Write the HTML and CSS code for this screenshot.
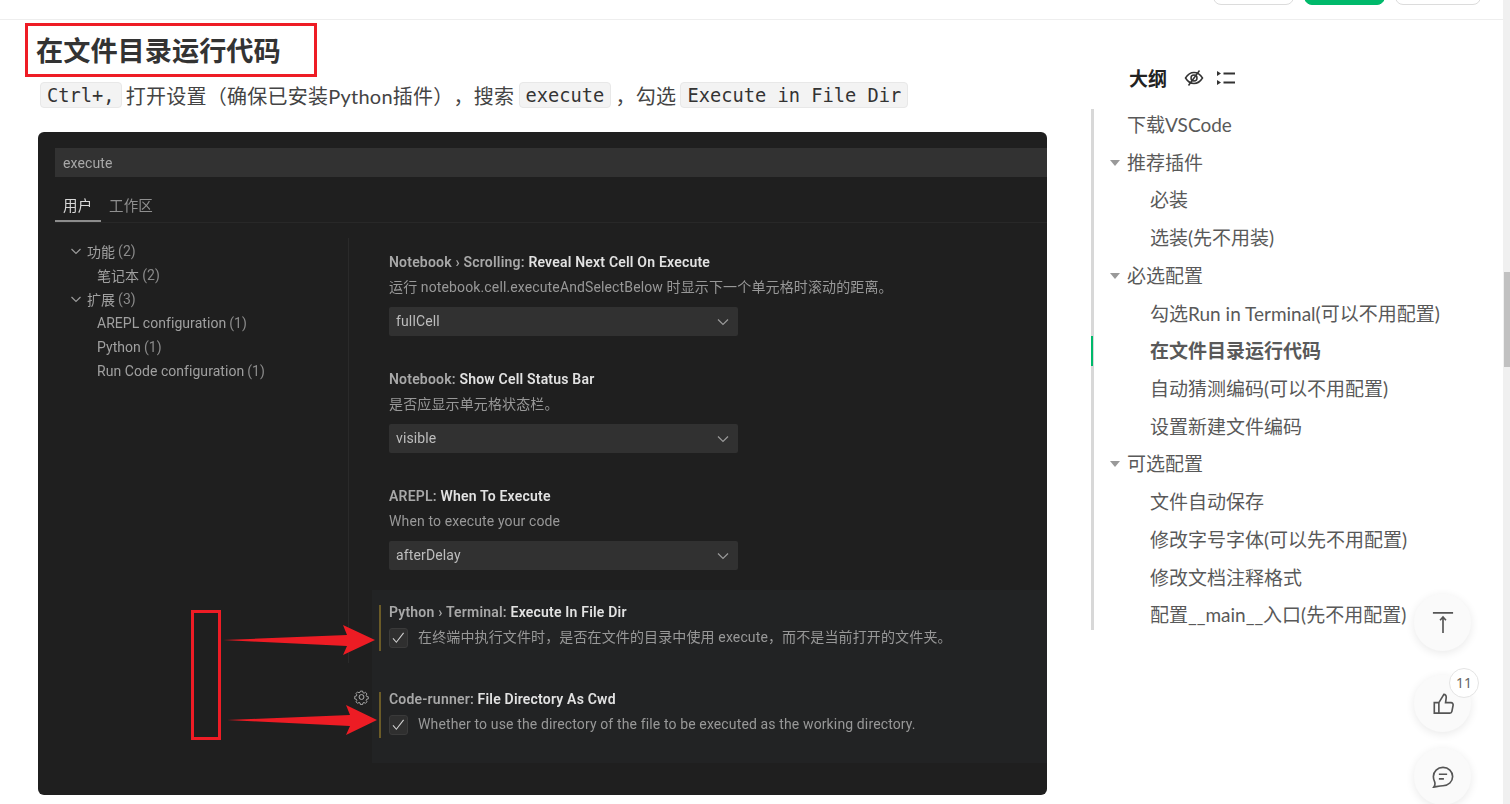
FILE: index.html
```html
<!DOCTYPE html>
<html lang="zh-CN">
<head>
<meta charset="utf-8">
<title>在文件目录运行代码</title>
<link rel="stylesheet" href="styles.css">
</head>
<body>
<div class="page">
  <header class="topbar">
    <span class="top-btn"></span>
    <span class="top-btn primary"></span>
    <span class="top-btn wide"></span>
  </header>
  <main class="main">
    <article class="article">
      <h2 class="heading">在文件目录运行代码</h2>
      <p class="para"><code class="code">Ctrl+,</code> 打开设置（确保已安装Python插件），搜索 <code class="code">execute</code> ，勾选 <code class="code">Execute in File Dir</code></p>
      <div class="shot">
        <div class="search">execute</div>
        <div class="tabs">
          <span class="tab active">用户</span>
          <span class="tab">工作区</span>
        </div>
        <div class="shot-body">
          <div class="tree">
            <div class="tree-row"><svg class="chev" viewBox="0 0 12 12"><path d="M1.5 4l4.5 4.5L10.500 4"/></svg>功能 <span>(2)</span></div>
            <div class="tree-row child">笔记本 <span>(2)</span></div>
            <div class="tree-row"><svg class="chev" viewBox="0 0 12 12"><path d="M1.500 4l4.500 4.500L10.500 4"/></svg>扩展 <span>(3)</span></div>
            <div class="tree-row child">AREPL configuration <span>(1)</span></div>
            <div class="tree-row child">Python <span>(1)</span></div>
            <div class="tree-row child">Run Code configuration <span>(1)</span></div>
          </div>
          <div class="settings">
            <section class="setting">
              <div class="s-title">Notebook › Scrolling: <b>Reveal Next Cell On Execute</b></div>
              <div class="s-desc">运行 notebook.cell.executeAndSelectBelow 时显示下一个单元格时滚动的距离。</div>
              <div class="select">fullCell<svg class="chev sel" viewBox="0 0 12 12"><path d="M1 3.500l5 5 5-5"/></svg></div>
            </section>
            <section class="setting">
              <div class="s-title">Notebook: <b>Show Cell Status Bar</b></div>
              <div class="s-desc">是否应显示单元格状态栏。</div>
              <div class="select">visible<svg class="chev sel" viewBox="0 0 12 12"><path d="M1 3.500l5 5 5-5"/></svg></div>
            </section>
            <section class="setting last">
              <div class="s-title">AREPL: <b>When To Execute</b></div>
              <div class="s-desc">When to execute your code</div>
              <div class="select">afterDelay<svg class="chev sel" viewBox="0 0 12 12"><path d="M1 3.500l5 5 5-5"/></svg></div>
            </section>
            <section class="band">
              <div class="item">
                <div class="i-title">Python › Terminal: <b>Execute In File Dir</b></div>
                <div class="i-row"><span class="check"><svg viewBox="0 0 20 20"><path d="M3.500 10.500l4 4.500L16 4"/></svg></span>在终端中执行文件时，是否在文件的目录中使用 execute，而不是当前打开的文件夹。</div>
              </div>
              <div class="item">
                <div class="i-title">Code-runner: <b>File Directory As Cwd</b></div>
                <div class="i-row"><span class="check"><svg viewBox="0 0 20 20"><path d="M3.500 10.500l4 4.500L16 4"/></svg></span>Whether to use the directory of the file to be executed as the working directory.</div>
              </div>
            </section>
          </div>
        </div>
        <svg class="gear" viewBox="0 0 16 16"><path d="M6.700 1h2.600l.4 1.900 1.300.6 1.700-1 1.800 1.800-1 1.700.5 1.300 2 .4v2.600l-2 .4-.5 1.300 1 1.700-1.800 1.800-1.700-1-1.300.5-.4 2H6.700l-.4-2-1.300-.5-1.700 1-1.800-1.800 1-1.700-.5-1.300-2-.4V7.200l2-.4.5-1.300-1-1.700 1.800-1.800 1.700 1 1.300-.6z" transform="translate(.8 .8) scale(.9)"/><circle cx="8" cy="8" r="2.600"/></svg>
        <div class="mark"></div>
        <svg class="arrows" viewBox="0 0 1009 663"><path d="M185 508L309 503L305 493L337 508L305 523L309 514Z"/><path d="M189 588L312 583L308 573L339 588L308 603L312 594Z"/></svg>
      </div>
    </article>
    <aside class="outline">
      <div class="outline-head">
        <span class="outline-title">大纲</span>
        <svg class="ic-eye" viewBox="0 0 20 20"><path d="M1.500 10C4 6 7 4.500 10 4.500S16 6 18.500 10C16 14 13 15.500 10 15.500S4 14 1.500 10Z"/><circle cx="10" cy="10" r="3"/><path d="M15.500 2.500L4.500 17.500"/></svg>
        <svg class="ic-list" viewBox="0 0 18 16"><path class="fill" d="M0 1l4 2.500L0 6zM0 10l4 2.500L0 15z"/><path d="M6.500 3.500H18M6.500 12.500H18"/></svg>
      </div>
      <div class="rail">
        <ul class="rows">
          <li class="row">下载VSCode</li>
          <li class="row tri">推荐插件</li>
          <li class="row sub">必装</li>
          <li class="row sub">选装(先不用装)</li>
          <li class="row tri">必选配置</li>
          <li class="row sub">勾选Run in Terminal(可以不用配置)</li>
          <li class="row sub active">在文件目录运行代码</li>
          <li class="row sub">自动猜测编码(可以不用配置)</li>
          <li class="row sub">设置新建文件编码</li>
          <li class="row tri">可选配置</li>
          <li class="row sub">文件自动保存</li>
          <li class="row sub">修改字号字体(可以先不用配置)</li>
          <li class="row sub">修改文档注释格式</li>
          <li class="row sub">配置__main__入口(先不用配置)</li>
        </ul>
      </div>
    </aside>
  </main>
</div>
<div class="scrollbar"><div class="thumb"></div></div>
<div class="fabs">
  <div class="fab top"><svg viewBox="0 0 24 24"><path d="M1 1H23M12 23V5.500M8.800 9L12 5.500l3.200 3.500"/></svg></div>
  <div class="fab like">
    <svg viewBox="0 0 24 24"><path d="M7.500 10.500H2.500V22H7.500M7.500 10.500V22H19.500C21 22 21.500 21 21.700 20L23 13.500C23.300 12 22.300 10.500 20.800 10.500H14.800L15.500 5C15.700 3 14.500 1.500 13 1.500L7.500 10.500Z"/></svg>
    <span class="badge">11</span>
  </div>
  <div class="fab chat"><svg viewBox="0 0 24 24"><path d="M12 1.500C18 1.500 22.500 6 22.500 11.500S18 21.500 12 21.500C8.500 21.500 5 22.500 2 23C3.500 21 3.500 19 2.800 17C2 15.500 1.500 13.500 1.500 11.500C1.500 6 6 1.500 12 1.500ZM7.500 9H16.500M7.500 14H13"/></svg></div>
</div>
</body>
</html>
```
FILE: styles.css
```css
* { box-sizing: border-box; }
html, body { margin: 0; height: 100%; }
body {
  display: flex;
  overflow: hidden;
  background: #fff;
  color: #333;
  font-family: "Noto Sans", "Noto Sans CJK SC", sans-serif;
  text-spacing-trim: space-all;
}
.page { flex: 1; min-width: 0; display: flex; flex-direction: column; height: 804px; overflow: hidden; }

.topbar {
  flex: none;
  height: 20px;
  display: flex;
  justify-content: flex-end;
  align-items: flex-end;
  gap: 10px;
  padding: 0 22px 14px 0;
  border-bottom: 1px solid #eeeeee;
  overflow: hidden;
}
.top-btn { flex: none; width: 81px; height: 30px; border: 1px solid #dcdcdc; border-radius: 8px; background: #fff; }
.top-btn.primary { background: #00b96b; border-color: #00b96b; }
.top-btn.wide { width: 86px; }

.main { flex: 1; display: flex; min-height: 0; }
.article { flex: 0 0 1091px; padding-left: 38px; }
.heading {
  width: 292px;
  height: 54px;
  margin: 3px 0 0 -13px;
  padding-left: 8px;
  border: 3px solid #ee1c25;
  font-size: 27.200px;
  line-height: 50px;
  font-weight: 700;
  color: #333;
  white-space: nowrap;
}
.para {
  margin: 5px 0 0 2px;
  height: 26px;
  font-family: "Lato", "Noto Sans CJK SC", sans-serif;
  font-size: 20px;
  line-height: 28px;
  letter-spacing: .25px;
  word-spacing: -1.200px;
  color: #444;
  white-space: nowrap;
}
.code {
  display: inline-block;
  height: 26px;
  padding: 0 6px;
  border: 1px solid #e8e8e8;
  border-radius: 4px;
  background: #f3f3f3;
  color: #333;
  font-family: "DejaVu Sans Mono", "Liberation Mono", monospace;
  font-size: 18.700px;
  line-height: 26px;
  letter-spacing: 0;
  word-spacing: 0;
  vertical-align: top;
}

.shot {
  position: relative;
  width: 1009px;
  height: 663px;
  margin-top: 24px;
  padding: 16px 0 0 17px;
  border-radius: 6px;
  overflow: hidden;
  background: #1f1f1f;
  color: #a6a6a6;
  font-family: "Roboto", "Noto Sans CJK SC", sans-serif;
  font-size: 14px;
  letter-spacing: .13px;
  filter: blur(.3px);
}
.search {
  height: 29px;
  padding-left: 8px;
  background: #323232;
  font-size: 14px;
  line-height: 30px;
  color: #a8a8a8;
}
.tabs {
  height: 46px;
  display: flex;
  align-items: flex-end;
  border-bottom: 1px solid #282828;
}
.tab { width: 46px; height: 33px; font-size: 14.500px; line-height: 36px; color: #8f8f8f; padding-left: 8px; white-space: nowrap; }
.tab.active { color: #d8d8d8; border-bottom: 2px solid #8c8c8c; }
.shot-body { display: flex; height: 440px; }
.tree {
  flex: none;
  width: 294px;
  margin-top: 15px;
  padding: 1px 0 0 15px;
  border-right: 1px solid #2a2a2a;
  letter-spacing: .05px;
}
.tree-row { display: flex; align-items: center; gap: 3px; height: 24px; color: #a0a0a0; white-space: nowrap; }
.tree-row span { color: #8a8a8a; }
.tree-row.child { padding-left: 27px; }
.chev { flex: none; width: 12px; height: 12px; margin-right: 2px; fill: none; stroke: #9a9a9a; stroke-width: 1.200; }
.settings { flex: 1; min-width: 0; padding-top: 27px; }
.setting { margin: 0 0 31px 40px; }
.setting.last { margin-bottom: 20px; }
.s-title { height: 24px; line-height: 24px; color: #a8a8a8; font-weight: 600; letter-spacing: .2px; white-space: nowrap; }
.s-title b, .i-title b { color: #e2e2e2; font-weight: 600; }
.s-desc { height: 25px; line-height: 26px; color: #989898; white-space: nowrap; }
.select {
  display: flex;
  align-items: center;
  justify-content: space-between;
  width: 349px;
  height: 29px;
  margin-top: 8px;
  padding: 0 8px 1px 7px;
  border-radius: 2px;
  background: #313131;
  color: #bdbdbd;
}
.chev.sel { margin: 2px 1px 0 0; }
.band {
  margin-left: 23px;
  height: 173px;
  padding: 15px 0 0 7px;
  background: #222324;
}
.item {
  height: 46px;
  margin-bottom: 41px;
  padding-left: 8px;
  border-left: 2px solid #6b5b27;
}
.i-title { height: 15px; line-height: 15px; color: #a8a8a8; font-weight: 600; letter-spacing: .2px; white-space: nowrap; }
.i-row { display: flex; align-items: flex-start; margin-top: 8px; gap: 10px; line-height: 18px; color: #989898; white-space: nowrap; }
.check {
  flex: none;
  width: 19px;
  height: 20px;
  border: 1px solid #3a3a3a;
  border-radius: 3px;
  background: #2f2f2f;
}
.check svg { display: block; width: 17px; height: 18px; fill: none; stroke: #cfcfcf; stroke-width: 1.300; }
.gear {
  position: absolute;
  left: 316px;
  top: 557px;
  width: 15px;
  height: 16px;
  fill: none;
  stroke: #b8b8b8;
  stroke-width: 1;
}
.mark {
  position: absolute;
  left: 153px;
  top: 478px;
  width: 30px;
  height: 130px;
  border: 3px solid #ee1c25;
}
.arrows { position: absolute; left: 0; top: 0; width: 1009px; height: 663px; fill: #ed1c24; pointer-events: none; }

.outline { flex: 1; min-width: 0; padding-top: 43px; }
.outline-head { display: flex; align-items: center; height: 30px; margin-bottom: 16px; padding-left: 38px; }
.outline-title { width: 55px; font-size: 19px; font-weight: 700; color: #222; }
.ic-eye { flex: none; width: 20px; height: 20px; fill: none; stroke: #333; stroke-width: 1.500; }
.ic-list { flex: none; width: 18px; height: 16px; margin-left: 13px; fill: none; stroke: #333; stroke-width: 1.800; }
.ic-list .fill { fill: #333; stroke: none; }
.rail { display: flow-root; border-left: 3px solid #d8d8d8; height: 521px; }
.rows { list-style: none; margin: -3px 0 0; padding: 0; }
.row {
  position: relative;
  height: 37.720px;
  padding-left: 33px;
  font-family: "Lato", "Noto Sans CJK SC", sans-serif;
  font-size: 19px;
  line-height: 37.720px;
  color: #595959;
  white-space: nowrap;
}
.row.sub { padding-left: 56px; }
.row.tri::before {
  content: "";
  position: absolute;
  left: 16px;
  top: 16px;
  border-style: solid;
  border-width: 6px 5px 0;
  border-color: #999 transparent transparent;
}
.row.active { font-weight: 700; }
.row.active::before {
  content: "";
  position: absolute;
  left: -3px;
  top: 4px;
  width: 2px;
  height: 30px;
  background: #00b96b;
}

.scrollbar { flex: none; width: 7px; height: 804px; padding: 272px 0 0 1px; background: #f0f0f0; }
.thumb { height: 95px; background: #c1c1c1; }

.fabs { position: fixed; left: 1414px; top: 594px; display: flex; flex-direction: column; }
.fab {
  position: relative;
  display: flex;
  align-items: center;
  justify-content: center;
  flex: none;
  width: 57px;
  height: 57px;
  border-radius: 50%;
  background: #fafafa;
  box-shadow: 0 2px 10px rgba(0, 0, 0, .09);
}
.fab svg { width: 22px; height: 22px; fill: none; stroke: #555; stroke-width: 1.800; }
.fab.like { margin-top: 24px; }
.fab.chat { margin-top: 16px; }
.badge {
  position: absolute;
  left: 35px;
  top: -7px;
  width: 30px;
  height: 30px;
  border: 1px solid #e4e4e4;
  border-radius: 50%;
  background: #fff;
  font-size: 14px;
  line-height: 28px;
  text-align: center;
  color: #666;
}
```
